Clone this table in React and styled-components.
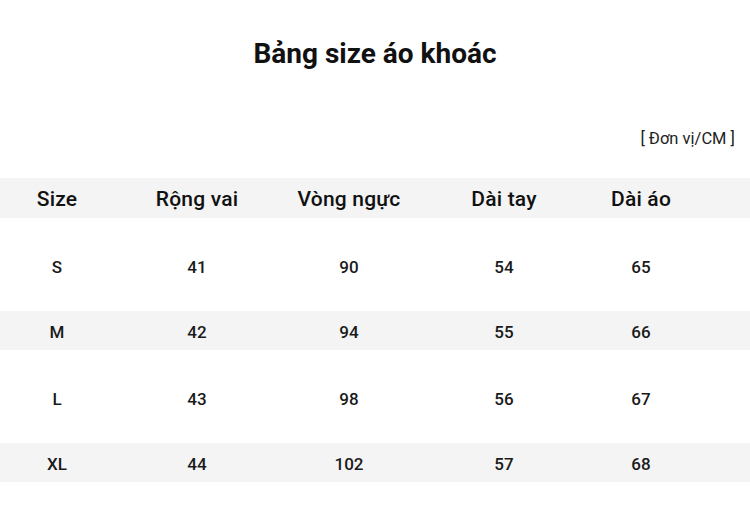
import React from 'react';
import styled, { createGlobalStyle } from 'styled-components';

const Global = createGlobalStyle`
  html, body { margin: 0; padding: 0; background: #fff; }
  body { font-family: Roboto, "Noto Sans", "Liberation Sans", sans-serif; color: #111; }
`;

const Page = styled.div`
  width: 750px;
  height: 525px;
  overflow: hidden;
  display: flex;
  flex-direction: column;
`;

const Title = styled.h1`
  margin: 37px 0 0;
  font-size: 28px;
  line-height: 33px;
  font-weight: 700;
  text-align: center;
  color: #111;
`;

const Unit = styled.div`
  margin-top: 59px;
  padding-right: 15px;
  text-align: right;
  font-size: 16.5px;
  line-height: 20px;
  color: #222;
`;

const Table = styled.div`
  margin-top: 29px;
  display: flex;
  flex-direction: column;
`;

const Row = styled.div`
  display: grid;
  grid-template-columns: 114px 166px 138px 172px 102px 1fr;
  align-items: center;
  height: ${p => p.$h}px;
  padding-top: ${p => p.$pt || 0}px;
  box-sizing: border-box;
  background: ${p => (p.$shade ? '#f4f4f4' : '#fff')};
`;

const Cell = styled.div`
  text-align: center;
  font-size: ${p => (p.$head ? 21 : 17)}px;
  font-weight: 500;
  letter-spacing: ${p => (p.$head ? '0.2px' : '0')};
  color: ${p => (p.$head ? '#111' : '#1a1a1a')};
  white-space: nowrap;
`;

const heads = ['Size', 'Rộng vai', 'Vòng ngực', 'Dài tay', 'Dài áo'];
const rows = [
  ['S', '41', '90', '54', '65'],
  ['M', '42', '94', '55', '66'],
  ['L', '43', '98', '56', '67'],
  ['XL', '44', '102', '57', '68'],
];

export default function App() {
  return (
    <Page>
      <Global />
      <Title>Bảng size áo khoác</Title>
      <Unit>[ Đơn vị/CM ]</Unit>
      <Table>
        <Row $h={40} $pt={2} $shade>
          {heads.map(h => <Cell key={h} $head>{h}</Cell>)}
        </Row>
        {rows.map((r, i) => (
          <Row key={r[0]} $h={i % 2 ? 39 : 93} $pt={i % 2 ? 3 : 5} $shade={i % 2 === 1}>
            {r.map((c, j) => <Cell key={j}>{c}</Cell>)}
          </Row>
        ))}
      </Table>
    </Page>
  );
}
